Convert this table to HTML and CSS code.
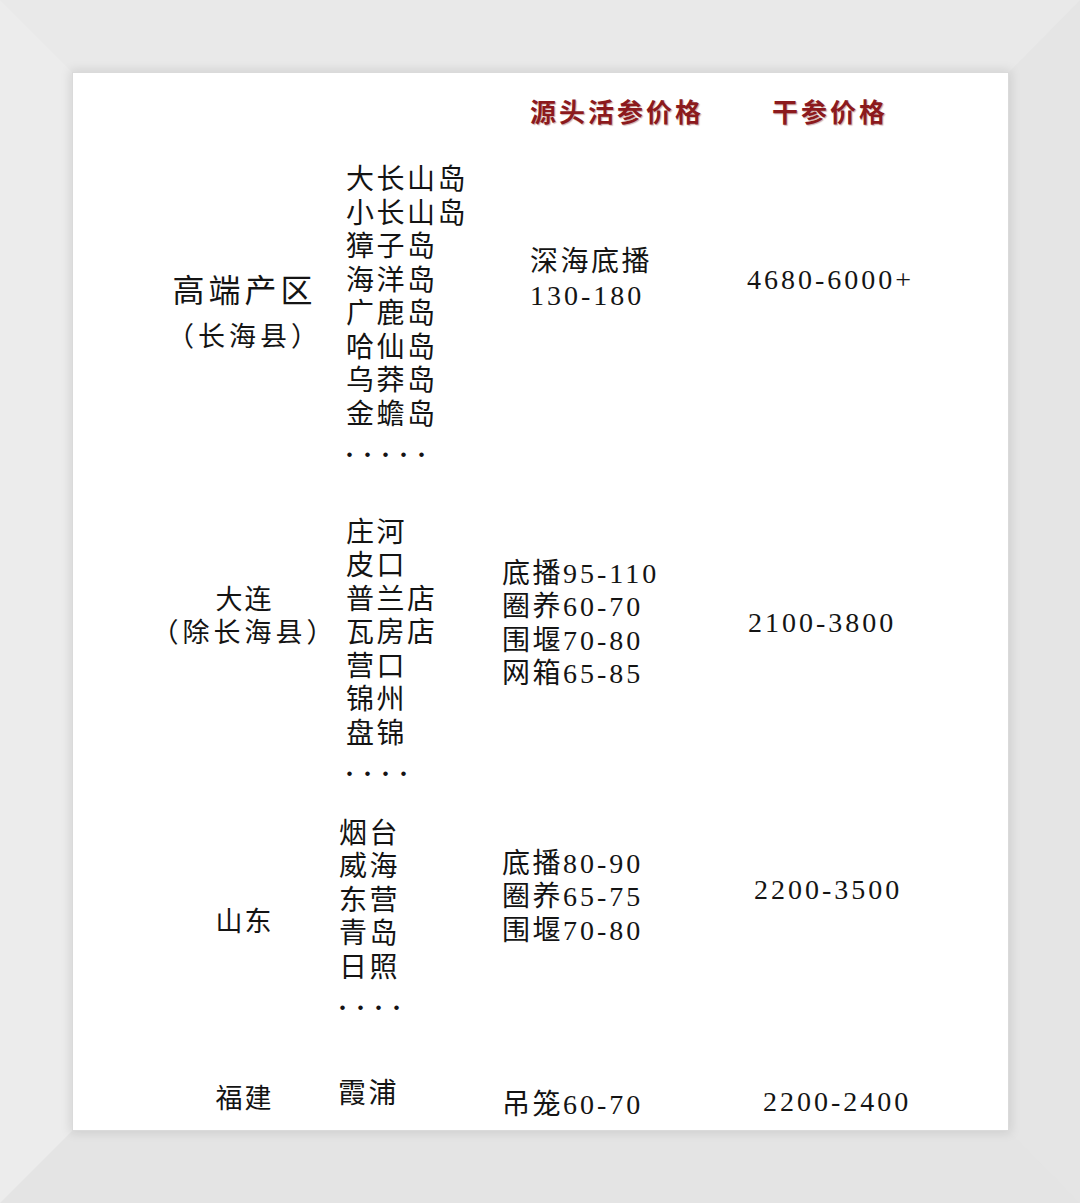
FILE: index.html
```html
<!DOCTYPE html>
<html lang="zh-CN">
<head>
<meta charset="utf-8">
<title>海参价格</title>
<link rel="stylesheet" href="styles.css">
</head>
<body>
<div class="frame">
  <div class="canvas">
    <div class="header">
      <div class="hcol1"></div>
      <div class="hcol2"></div>
      <div class="hcol3"><span class="htitle">源头活参价格</span></div>
      <div class="hcol4"><span class="htitle">干参价格</span></div>
    </div>

    <div class="section s1">
      <div class="c1">
        <div class="big">高端产区</div>
        <div class="sub">（长海县）</div>
      </div>
      <div class="c2">
        <div>大长山岛</div>
        <div>小长山岛</div>
        <div>獐子岛</div>
        <div>海洋岛</div>
        <div>广鹿岛</div>
        <div>哈仙岛</div>
        <div>乌莽岛</div>
        <div>金蟾岛</div>
        <div class="dots">.....</div>
      </div>
      <div class="c3">
        <div>深海底播</div>
        <div class="num">130-180</div>
      </div>
      <div class="c4">
        <div class="num">4680-6000+</div>
      </div>
    </div>

    <div class="section s2">
      <div class="c1">
        <div>大连</div>
        <div class="sub2">（除长海县）</div>
      </div>
      <div class="c2">
        <div>庄河</div>
        <div>皮口</div>
        <div>普兰店</div>
        <div>瓦房店</div>
        <div>营口</div>
        <div>锦州</div>
        <div>盘锦</div>
        <div class="dots">....</div>
      </div>
      <div class="c3">
        <div>底播<span class="num">95-110</span></div>
        <div>圈养<span class="num">60-70</span></div>
        <div>围堰<span class="num">70-80</span></div>
        <div>网箱<span class="num">65-85</span></div>
      </div>
      <div class="c4">
        <div class="num">2100-3800</div>
      </div>
    </div>

    <div class="section s3">
      <div class="c1">
        <div>山东</div>
      </div>
      <div class="c2">
        <div>烟台</div>
        <div>威海</div>
        <div>东营</div>
        <div>青岛</div>
        <div>日照</div>
        <div class="dots">....</div>
      </div>
      <div class="c3">
        <div>底播<span class="num">80-90</span></div>
        <div>圈养<span class="num">65-75</span></div>
        <div>围堰<span class="num">70-80</span></div>
      </div>
      <div class="c4">
        <div class="num">2200-3500</div>
      </div>
    </div>

    <div class="section s4">
      <div class="c1">
        <div>福建</div>
      </div>
      <div class="c2">
        <div>霞浦</div>
      </div>
      <div class="c3">
        <div>吊笼<span class="num">60-70</span></div>
      </div>
      <div class="c4">
        <div class="num">2200-2400</div>
      </div>
    </div>
  </div>
</div>
</body>
</html>
```

FILE: styles.css
```css
html, body {
  margin: 0;
  padding: 0;
  background: #e8e8e8;
}

.frame {
  width: 1080px;
  height: 1203px;
  box-sizing: border-box;
  border-style: solid;
  border-width: 73px 72px 73px 73px;
  border-color: #e9e9e9 #e5e5e5 #e4e4e4 #ececec;
  background: #ffffff;
  box-shadow: inset 0 0 0 0 transparent;
}

.canvas {
  height: 100%;
  background: #ffffff;
  box-shadow: 0 0 0 1px #dadada, 0 0 10px 3px rgba(0, 0, 0, 0.10);
  box-sizing: border-box;
  padding: 18px 0 0 70px;
  font-family: "Liberation Serif", "Noto Sans CJK SC", serif;
  font-size: 28px;
  line-height: 33.5px;
  letter-spacing: 2.5px;
  color: #141414;
}

.header,
.section {
  display: grid;
  grid-template-columns: 203px 156px 238px 268px;
  align-items: start;
}

.header {
  height: 40px;
  line-height: 40px;
}

.htitle {
  font-family: "Noto Sans CJK SC", sans-serif;
  font-weight: 700;
  font-size: 26px;
  letter-spacing: 3px;
  color: #8c1a1d;
  text-shadow: 1px 1px 1px rgba(110, 20, 20, 0.35);
}

.hcol3 { padding-left: 28px; }
.hcol4 { padding-left: 32px; }

.num {
  letter-spacing: 3px;
}

.c1 {
  text-align: center;
  font-size: 27px;
  letter-spacing: 2px;
}

.big {
  font-size: 32px;
  letter-spacing: 4px;
  line-height: 40px;
}

.sub {
  font-size: 27px;
  letter-spacing: 4px;
  line-height: 40px;
  margin-top: 6px;
}

.sub2 {
  letter-spacing: 4px;
}

.dots {
  letter-spacing: 11px;
  font-weight: 700;
}

/* section 1 */
.s1 { margin-top: 32px; }
.s1 .c1 { padding-top: 108px; }
.s1 .c3 { padding-top: 82px; padding-left: 28px; }
.s1 .c4 { padding-top: 100px; padding-left: 7px; }

/* section 2 */
.s2 { margin-top: 51px; }
.s2 .c1 { padding-top: 68px; }
.s2 .c3 { padding-top: 41px; }
.s2 .c4 { padding-top: 90px; padding-left: 8px; }

/* section 3 */
.s3 { margin-top: 33px; }
.s3 .c1 { padding-top: 89px; }
.s3 .c2 { margin-left: -7px; }
.s3 .c3 { padding-top: 30px; }
.s3 .c4 { padding-top: 56px; padding-left: 14px; }

/* section 4 */
.s4 { margin-top: 59px; }
.s4 .c1 { padding-top: 6px; }
.s4 .c2 { margin-left: -8px; }
.s4 .c3 { padding-top: 11px; }
.s4 .c4 { padding-top: 8px; padding-left: 23px; }
```
